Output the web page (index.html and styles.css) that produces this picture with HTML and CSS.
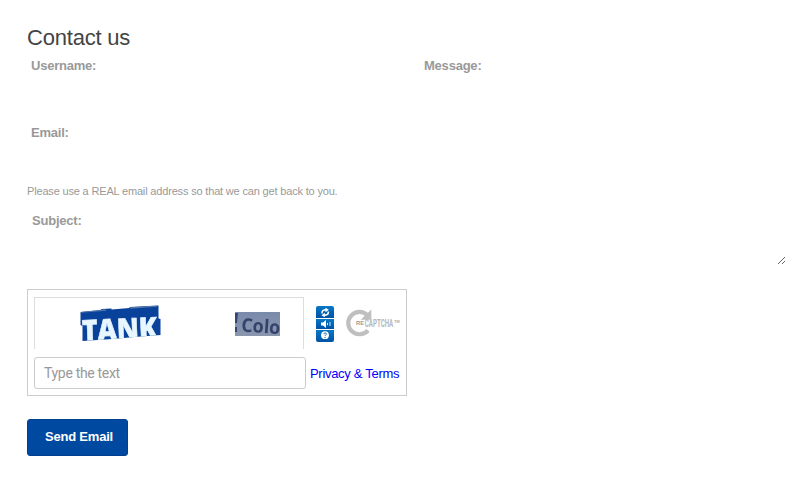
FILE: index.html
```html
<!DOCTYPE html>
<html lang="en">
<head>
<meta charset="utf-8">
<title>Contact us</title>
<link rel="stylesheet" href="styles.css">
</head>
<body>
<form class="contact">
  <h1 class="title">Contact us</h1>
  <div class="columns">
    <div class="left">
      <div class="field field-user"><label class="label">Username:</label></div>
      <div class="field field-email"><label class="label">Email:</label></div>
      <p class="hint">Please use a REAL email address so that we can get back to you.</p>
      <div class="field field-subject"><label class="label label-subject">Subject:</label></div>
    </div>
    <div class="right">
      <label class="label label-message">Message:</label>
      <svg class="grip" width="8" height="8" viewBox="0 0 8 8" shape-rendering="crispEdges" fill="#666"><path d="M0 7h1v1H0zM1 6h1v1H1zM2 5h1v1H2zM3 4h1v1H3zM4 3h1v1H4zM5 2h1v1H5zM6 1h1v1H6zM4 7h1v1H4zM5 6h1v1H5zM6 5h1v1H6z"/></svg>
    </div>
  </div>
  <div class="captcha">
    <div class="challenge-row">
      <div class="challenge">
        <svg width="268" height="51" viewBox="35 298 268 51">
          <defs>
            <filter id="soft"><feGaussianBlur stdDeviation="0.7"/></filter>
            <linearGradient id="plate" x2="0" y2="1"><stop offset="0" stop-color="#798aaa"/><stop offset="1" stop-color="#8a96ae"/></linearGradient>
            <clipPath id="cut"><path d="M235 312h45v24h-45z"/></clipPath>
            <clipPath id="sign"><path d="M80.500 312l20-2 1-1 10-.5v1l18-1.500v-1l29-1.500v13l2 .5v16l-26 2-22 2-30 2v-15l-2-1z"/></clipPath>
          </defs>
          <g clip-path="url(#sign)">
            <path fill="#08429b" d="M78 304h84v40H78z"/>
            <g filter="url(#soft)">
              <path d="M81 312l25-2M130 308l27-2" stroke="#5277a8" stroke-width="1.500"/>
              <text class="word-tank" x="82.500" y="341" textLength="75" lengthAdjust="spacingAndGlyphs" transform="rotate(-2.500 82 341)">TANK</text>
            </g>
          </g>
          <g clip-path="url(#cut)">
            <path fill="url(#plate)" d="M235 312h45v24h-45z"/>
            <g filter="url(#soft)">
              <path d="M235 313h3l-1 10h-2zM235 327h2v5h-2z" fill="#344575"/>
              <text class="word-colo" x="241" y="331.500" textLength="39" lengthAdjust="spacingAndGlyphs" transform="rotate(4 241 331.500)">Colo</text>
            </g>
          </g>
        </svg>
      </div>
      <svg class="tools" width="18" height="36" viewBox="0 0 18 36">
        <defs><linearGradient id="blue" x2="0" y2="1"><stop offset="0" stop-color="#0878c5"/><stop offset="1" stop-color="#0052a5"/></linearGradient></defs>
        <path fill="url(#blue)" d="M2 0h14q2 0 2 2v10H0V2q0-2 2-2z"/>
        <path fill="url(#blue)" d="M0 13h18v10H0z"/>
        <path fill="url(#blue)" d="M0 24h18v10q0 2-2 2H2q-2 0-2-2z"/>
        <path d="M6 7.500q-.5-3.800 4.500-3.800M12.300 5.500q.5 3.800-4.500 3.800" fill="none" stroke="#fff" stroke-width="1.500"/>
        <path d="M9.500 1.800l3.300 2-3.300 2.500zM8.800 11.200l-3.300-2 3.300-2.500z" fill="#fff"/>
        <path d="M5 16.500h2l3-2.500v8l-3-2.500H5z" fill="#fff"/>
        <path d="M11.500 17v2.200M14 16v4" stroke="#d4e8f7" stroke-width="1"/>
        <circle cx="9" cy="29.200" r="3.900" fill="#fff"/>
        <path d="M7.700 28.200q.2-1.300 1.500-1.200t1.200 1.300q-.1.500-.8.900-.5.300-.5.900M9.100 31v1" fill="none" stroke="#1265b1" stroke-width="1"/>
      </svg>
      <svg class="logo" width="56" height="30" viewBox="345 308 56 30">
        <path d="M367.700 315.500a11.200 11.200 0 1 0 .3 14.800" fill="none" stroke="#bfbfbf" stroke-width="4.200"/>
        <path d="M371.300 309.500v10.300h-10.700z" fill="#bfbfbf"/>
        <text class="logo-re" x="356" y="325" textLength="8" lengthAdjust="spacingAndGlyphs">RE</text>
        <text class="logo-name" x="364.800" y="326.700" textLength="28.400" lengthAdjust="spacingAndGlyphs">CAPTCHA</text>
        <text class="logo-tm" x="394.200" y="322.500" textLength="5.500" lengthAdjust="spacingAndGlyphs">TM</text>
      </svg>
    </div>
    <div class="answer-row">
      <input class="answer" type="text" placeholder="Type the text">
      <a class="terms">Privacy &amp; Terms</a>
    </div>
  </div>
  <button class="send" type="button">Send Email</button>
</form>
</body>
</html>
```
FILE: styles.css
```css
* { box-sizing: border-box; }
body {
  margin: 0;
  background: #fff;
  color: #999;
  font-family: "Liberation Sans", Arial, sans-serif;
}
.contact { padding: 24px 19px 0 27px; }
.title {
  margin: 0;
  height: 32px;
  font-size: 22px;
  font-weight: 400;
  line-height: 27px;
  letter-spacing: -.2px;
  color: #444;
}
.columns {
  display: grid;
  grid-template-columns: 393px 1fr;
  height: 210px;
}
.field { padding-left: 4px; }
.field-user { height: 67px; }
.field-email { height: 60px; }
.field-subject { padding-left: 5px; }
.label {
  display: block;
  font-size: 13px;
  font-weight: 700;
  line-height: 19px;
  letter-spacing: -.22px;
}
.hint {
  margin: 0;
  height: 28px;
  font-size: 11px;
  line-height: 16px;
  letter-spacing: -.17px;
  white-space: nowrap;
}
.right {
  display: flex;
  flex-direction: column;
  justify-content: space-between;
  padding-left: 4px;
}
.grip { align-self: flex-end; margin: 0 1px 2px 0; }
.captcha {
  width: 380px;
  height: 107px;
  margin-top: 23px;
  padding: 7px 6px;
  border: 1px solid #ccc;
}
.challenge-row { display: flex; align-items: flex-start; height: 60px; }
.challenge-row > * { flex: none; }
.challenge {
  width: 270px;
  height: 52px;
  border: 1px solid #ddd;
  border-bottom: 0;
}
.challenge svg { display: block; }
.tools { margin: 9px 0 0 12px; }
.logo { margin: 11px 0 0 11px; }
.word-tank {
  font: 800 29px "Open Sans", sans-serif;
  fill: #e7f6ff;
  stroke: #e7f6ff;
  stroke-width: .6px;
}
.word-colo { font: 700 19px "Open Sans", sans-serif; fill: #35436c; }
.logo-re { font: 700 6px "Liberation Sans", sans-serif; fill: #999; }
.logo-name { font: 700 10.5px Roboto, sans-serif; fill: #b8b8b8; }
.logo-tm { font: 700 4px "Liberation Sans", sans-serif; fill: #aaa; }
.answer-row { display: flex; align-items: center; gap: 4px; }
.answer {
  flex: none;
  width: 272px;
  height: 32px;
  padding: 0 9px;
  border: 1px solid #ccc;
  border-radius: 3px;
  font: 14px Roboto, sans-serif;
  letter-spacing: -.32px;
}
.answer::placeholder { color: #999; }
.terms {
  font-size: 13px;
  letter-spacing: -.3px;
  color: #00f;
  white-space: nowrap;
}
.send {
  display: block;
  width: 101px;
  height: 37px;
  margin-top: 23px;
  padding: 0 0 2px 3px;
  border: 1px solid #00408f;
  border-radius: 3px;
  background: #0049a0;
  color: #fff;
  font: 700 13px "Liberation Sans", Arial, sans-serif;
  letter-spacing: -.22px;
}
```
